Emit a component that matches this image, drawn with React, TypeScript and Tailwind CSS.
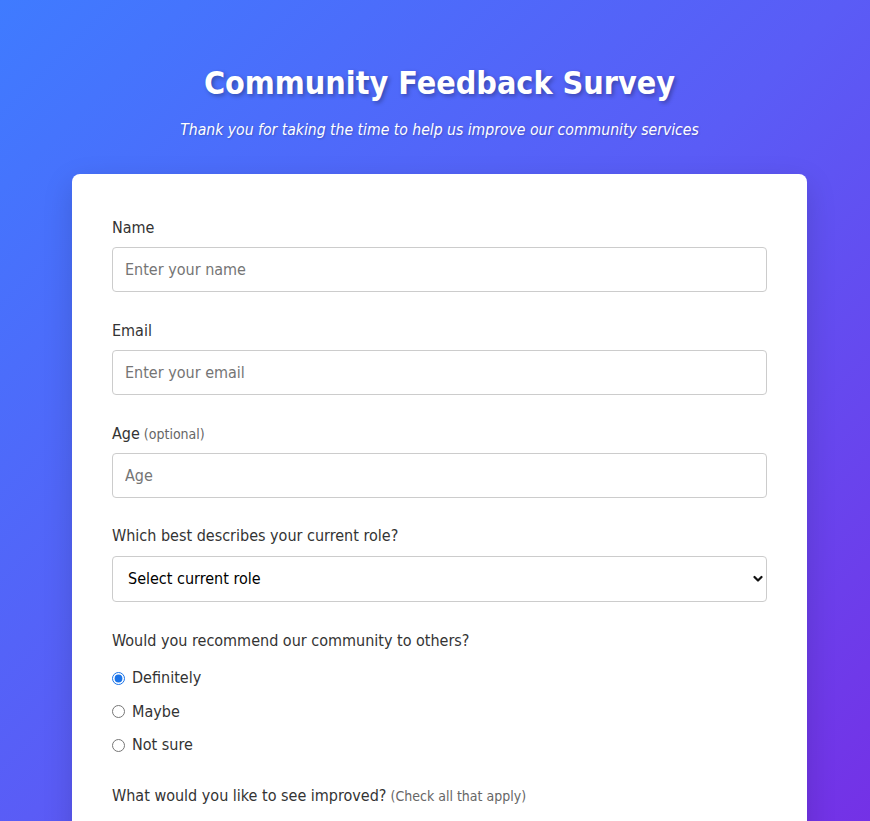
import React from "react";

const font = { fontFamily: '"DejaVu Sans Condensed", "DejaVu Sans", sans-serif' };

function Field({ label, extra, placeholder }: { label: string; extra?: string; placeholder: string }) {
  return (
    <div className="mb-[28px]">
      <label className="block h-[20px] leading-[22px] mb-[10px] text-[16px] text-[#333]">
        {label}
        {extra && <span className="text-[14px] text-[#666]"> {extra}</span>}
      </label>
      <input
        type="text"
        placeholder={placeholder}
        className="block w-full h-[45px] px-[12px] text-[16px] text-[#333] bg-white border border-[#ccc] rounded-[4px] placeholder:text-[#757575] outline-none"
        style={font}
      />
    </div>
  );
}

export default function App() {
  return (
    <div
      className="min-h-screen bg-fixed bg-[linear-gradient(135deg,#3f7bff_0%,#5a5cf6_50%,#7431e6_100%)] pl-[72px] pr-[63px] pt-[63px] pb-[40px]"
      style={font}
    >
      <h1 className="h-[40px] leading-[40px] text-center text-white font-bold text-[32px] [text-shadow:2px_2px_4px_rgba(0,0,0,0.3)]">
        Community Feedback Survey
      </h1>
      <p className="mt-[16px] h-[20px] leading-[22px] text-center text-white italic text-[15.6px] [text-shadow:1px_1px_2px_rgba(0,0,0,0.2)]">
        Thank you for taking the time to help us improve our community services
      </p>
      <div className="mt-[35px] bg-white rounded-[8px] shadow-[0_10px_30px_rgba(0,0,0,0.15)] pt-[43px] px-[40px] pb-[80px]">
        <Field label="Name" placeholder="Enter your name" />
        <Field label="Email" placeholder="Enter your email" />
        <Field label="Age" extra="(optional)" placeholder="Age" />

        <div className="mb-[28px]">
          <label className="block h-[20px] leading-[20px] mb-[10px] text-[16px] text-[#333]">
            Which best describes your current role?
          </label>
          <div className="relative">
            <select
              className="block w-full h-[46px] pl-[15px] pr-[30px] text-[16px] text-black bg-white border border-[#ccc] rounded-[4px] appearance-none outline-none"
              style={font}
              defaultValue=""
            >
              <option value="">Select current role</option>
              <option>Student</option>
              <option>Full-time employee</option>
              <option>Part-time employee</option>
              <option>Self-employed</option>
              <option>Retired</option>
            </select>
            <svg
              className="absolute right-[4px] top-1/2 -translate-y-1/2 pointer-events-none"
              width="10"
              height="8"
              viewBox="0 0 10 8"
            >
              <path d="M1.5 2 L5 5.5 L8.5 2" fill="none" stroke="#111" strokeWidth="2.2" strokeLinecap="round" strokeLinejoin="round" />
            </svg>
          </div>
        </div>

        <div className="mb-[28px]">
          <label className="block h-[20px] leading-[22px] mb-[10px] text-[16px] text-[#333]">
            Would you recommend our community to others?
          </label>
          <div className="pt-[6px] flex flex-col gap-[9.5px]">
            {["Definitely", "Maybe", "Not sure"].map((o, i) => (
              <label key={o} className="flex items-center h-[24px] text-[16px] text-[#333]">
                <input
                  type="radio"
                  name="recommend"
                  defaultChecked={i === 0}
                  className="m-0 w-[13px] h-[13px] accent-[#1a73e8]"
                />
                <span className="ml-[7px]">{o}</span>
              </label>
            ))}
          </div>
        </div>

        <div>
          <label className="block h-[20px] leading-[22px] text-[16px] text-[#333]">
            What would you like to see improved?
            <span className="text-[14px] text-[#666]"> (Check all that apply)</span>
          </label>
        </div>
      </div>
    </div>
  );
}
